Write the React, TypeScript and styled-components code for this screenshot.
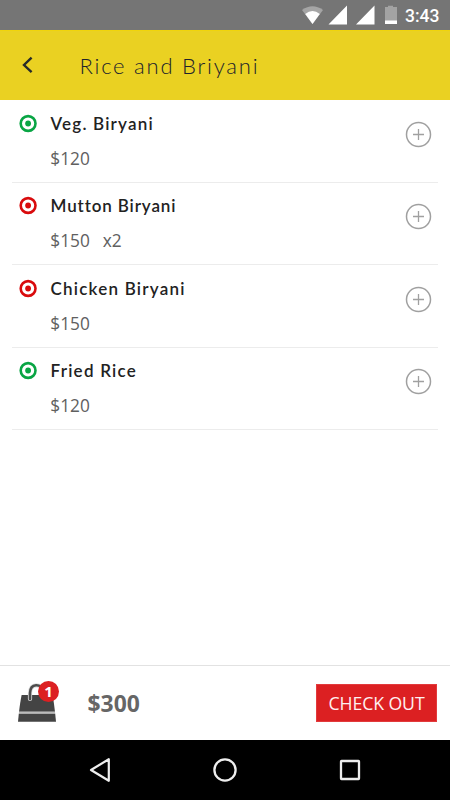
import React from 'react';
import styled, { createGlobalStyle } from 'styled-components';

const GlobalStyle = createGlobalStyle`
  * { box-sizing: border-box; }
  body { margin: 0; background: #fff; }
  svg { display: block; flex: none; }
`;

const Screen = styled.div`
  width: 450px;
  height: 800px;
  display: flex;
  flex-direction: column;
  background: #fff;
  overflow: hidden;
  font-family: 'Open Sans', sans-serif;
`;

const StatusBar = styled.div`
  height: 30px;
  flex: none;
  display: flex;
  align-items: center;
  justify-content: flex-end;
  padding-right: 10px;
  background: #757575;
`;

const Clock = styled.span`
  width: 35px;
  margin-left: 8px;
  padding-top: 1px;
  font: 500 17.5px/30px Roboto, sans-serif;
  color: #fff;
  white-space: nowrap;
`;

const Header = styled.header`
  height: 70px;
  flex: none;
  display: flex;
  align-items: center;
  padding-left: 20px;
  background: #ead122;
  border-top: 1px solid #f0d40c;
`;

const BackButton = styled.button`
  border: 0;
  padding: 0 0 1px;
  background: none;
`;

const Title = styled.h1`
  margin: 0 0 0 43.5px;
  font: 300 22px/30px Lato, sans-serif;
  letter-spacing: 1.78px;
  color: #20222c;
  white-space: nowrap;
`;

const Menu = styled.ul`
  flex: 1;
  list-style: none;
  margin: 0;
  padding: 0 12px;
`;

const Item = styled.li`
  height: 82.5px;
  display: flex;
  border-bottom: 1px solid #ececec;
  padding: 13.6px 6px 0 7px;
`;

const Details = styled.div`
  flex: 1;
  margin-left: 12px;
`;

const Name = styled.h2<{ $spacing: number }>`
  margin: -1px 0 0 0.5px;
  font: 600 17px/22px Lato, sans-serif;
  letter-spacing: ${(p) => p.$spacing}px;
  color: #222;
  white-space: nowrap;
`;

const Price = styled.div`
  display: flex;
  gap: 13px;
  margin: 12px 0 0 0.3px;
  font-size: 17.3px;
  line-height: 24px;
  color: #606060;
`;

const AddButton = styled.button`
  align-self: flex-start;
  margin-top: 7px;
  border: 0;
  padding: 0;
  background: none;
`;

const CartBar = styled.footer`
  height: 75px;
  flex: none;
  display: flex;
  align-items: center;
  padding: 0 13px 0 17px;
  border-top: 1px solid #e2e2e2;
`;

const Cart = styled.div`
  position: relative;
  width: 44px;
  height: 44px;
`;

const Badge = styled.span`
  position: absolute;
  left: 21px;
  top: 0;
  width: 21px;
  height: 21px;
  border-radius: 50%;
  background: #dc2022;
  color: #fff;
  font-size: 15px;
  font-weight: 700;
  line-height: 20px;
  text-align: center;
`;

const Total = styled.strong`
  flex: 1;
  margin-left: 26.5px;
  padding-top: 1px;
  font-size: 22.9px;
  line-height: 32px;
  color: #666;
`;

const Checkout = styled.button`
  width: 121px;
  height: 38px;
  border: 1px solid #e23a3c;
  padding: 0;
  background: #dc2022;
  color: #fff0f0;
  font: 400 17.7px/36px 'Open Sans', sans-serif;
  letter-spacing: -0.1px;
  white-space: nowrap;
`;

const NavBar = styled.nav`
  height: 60px;
  flex: none;
  display: flex;
  align-items: center;
  justify-content: space-between;
  padding: 0 87px;
  background: #000;
`;

const items = [
  { name: 'Veg. Biryani', price: '$120', veg: true, spacing: 1.2 },
  { name: 'Mutton Biryani', price: '$150', qty: 'x2', veg: false, spacing: 0.88 },
  { name: 'Chicken Biryani', price: '$150', veg: false, spacing: 1.22 },
  { name: 'Fried Rice', price: '$120', veg: true, spacing: 1.24 },
];

const Marker = ({ color }: { color: string }) => (
  <svg width="19" height="19" viewBox="0 0 19 19">
    <circle cx="9.1" cy="9.5" r="7.4" fill="none" stroke={color} strokeWidth="2.6" />
    <circle cx="9.1" cy="9.5" r="2.9" fill={color} />
  </svg>
);

export default function App() {
  return (
    <Screen>
      <GlobalStyle />
      <StatusBar>
        <svg width="96" height="30" viewBox="0 0 96 30">
          <path d="M1 10Q11.5 2.5 22 10L11.5 24Z" fill="#a5a5a5" />
          <path d="M4.2 14Q11.5 8.2 18.8 14L11.5 24Z" fill="#fff" />
          <path d="M27.5 24.5H46V5.5Z M55 24.5H73.5V5.5Z" fill="#fff" />
          <path d="M84 7h3V5.7h5V7h4v17H84Z" fill="#a3a3a3" />
          <path d="M84 20.5H96V24H84Z" fill="#fff" />
        </svg>
        <Clock>3:43</Clock>
      </StatusBar>
      <Header>
        <BackButton aria-label="Back">
          <svg width="16" height="20" viewBox="0 0 16 20">
            <path d="M11.6 2.7 4 10l7.6 7.2" fill="none" stroke="#272b29" strokeWidth="2.4" />
          </svg>
        </BackButton>
        <Title>Rice and Briyani</Title>
      </Header>
      <Menu>
        {items.map((item) => (
          <Item key={item.name}>
            <Marker color={item.veg ? '#09a544' : '#d90b0d'} />
            <Details>
              <Name $spacing={item.spacing}>{item.name}</Name>
              <Price>
                <span>{item.price}</span>
                {item.qty && <span>{item.qty}</span>}
              </Price>
            </Details>
            <AddButton aria-label="Add">
              <svg width="27" height="27" viewBox="0 0 27 27" fill="none" stroke="#a0a0a0">
                <circle cx="13.5" cy="13.5" r="12" strokeWidth="1.5" />
                <path d="M13.5 8v11M8 13.5h11" strokeWidth="1.3" />
              </svg>
            </AddButton>
          </Item>
        ))}
      </Menu>
      <CartBar>
        <Cart>
          <svg width="44" height="44" viewBox="0 0 44 44">
            <path d="M4.6 14H35.6Q37 22 38 30.8H2Q3 22 4.6 14Z" fill="#444" />
            <path d="M2 30.8H38L38.2 32.8H1.8Z" fill="#bbb" />
            <path d="M1.8 32.8H38.2L39 40.8H1Z" fill="#444" />
            <path d="M13 18V12Q13.4 4.5 19 4.3T27 10" fill="none" stroke="#ddd" strokeWidth="4.2" strokeLinecap="round" />
            <path d="M13 18V12Q13.4 4.5 19 4.3T27 10" fill="none" stroke="#4c4c4c" strokeWidth="2.6" strokeLinecap="round" />
          </svg>
          <Badge>1</Badge>
        </Cart>
        <Total>$300</Total>
        <Checkout>CHECK OUT</Checkout>
      </CartBar>
      <NavBar>
        <svg width="26" height="26" viewBox="0 0 26 26">
          <path d="M21.8 2.2V23.8L4 13Z" fill="none" stroke="#eee" strokeWidth="2.2" strokeLinejoin="round" />
        </svg>
        <svg width="26" height="26" viewBox="0 0 26 26">
          <circle cx="13" cy="13" r="10.6" fill="none" stroke="#eee" strokeWidth="2.3" />
        </svg>
        <svg width="26" height="26" viewBox="0 0 26 26">
          <rect x="4" y="4" width="18" height="18" rx=".5" fill="none" stroke="#eee" strokeWidth="2.3" />
        </svg>
      </NavBar>
    </Screen>
  );
}
